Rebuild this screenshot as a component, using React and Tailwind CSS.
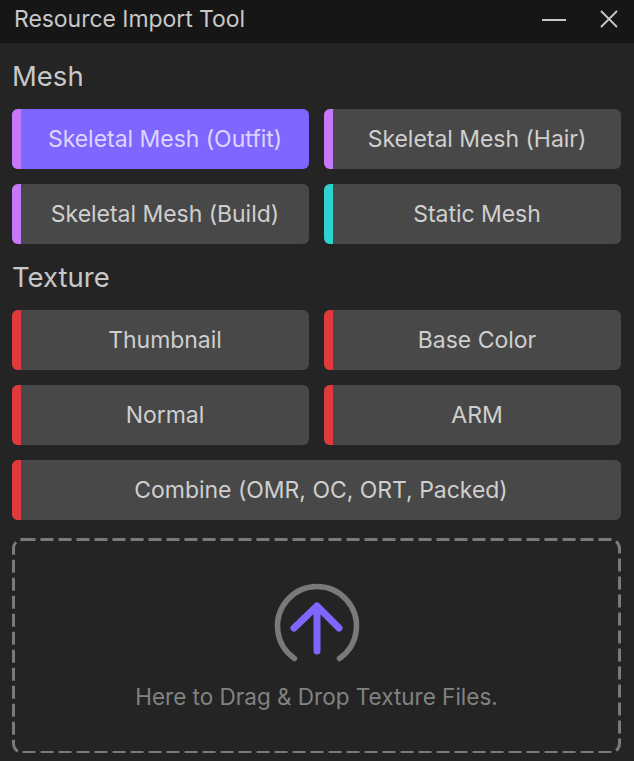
const meshButtons = [
  { label: 'Skeletal Mesh (Outfit)', accent: 'bg-[#c678fa]', active: true },
  { label: 'Skeletal Mesh (Hair)', accent: 'bg-[#c678fa]' },
  { label: 'Skeletal Mesh (Build)', accent: 'bg-[#c678fa]' },
  { label: 'Static Mesh', accent: 'bg-[#2dd4cf]' },
];

const textureButtons = [
  { label: 'Thumbnail', accent: 'bg-[#e03a3c]' },
  { label: 'Base Color', accent: 'bg-[#e03a3c]' },
  { label: 'Normal', accent: 'bg-[#e03a3c]' },
  { label: 'ARM', accent: 'bg-[#e03a3c]' },
  { label: 'Combine (OMR, OC, ORT, Packed)', accent: 'bg-[#e03a3c]', wide: true },
];

const TypeButton = ({ label, accent, active, wide }) => (
  <button
    className={`flex h-[60px] overflow-hidden rounded-[6px] text-[23px] tracking-[-0.03px] ${wide ? 'col-span-2' : ''} ${
      active ? 'bg-[#7f66ff] text-[#dcd6ff]' : 'bg-[#484848] text-[#cfcfcf]'
    }`}
  >
    <span className={`w-[9px] shrink-0 ${accent}`} />
    <span className="flex flex-1 items-center justify-center">{label}</span>
  </button>
);

const App = () => {
  return (
    <div className="flex h-[761px] w-[634px] flex-col overflow-hidden bg-[#242424] font-['Inter',sans-serif]">
      {/* title bar */}
      <div className="flex h-[43px] shrink-0 items-center justify-between bg-[#161616] pb-[5px] pl-[14px] pr-[16px]">
        <span className="text-[23px] tracking-[-0.05px] text-[#c8c8c8]">Resource Import Tool</span>
        <div className="flex items-center gap-[34px] text-[#c8c8c8]">
          <svg width="24" height="18" viewBox="0 0 24 18" fill="none" stroke="currentColor" strokeWidth="2">
            <path d="M0 10H24" />
          </svg>
          <svg width="18" height="18" viewBox="0 0 18 18" fill="none" stroke="currentColor" strokeWidth="1.8">
            <path d="M1 1L17 17M17 1L1 17" />
          </svg>
        </div>
      </div>

      <div className="flex flex-1 flex-col pb-[8px] pl-[12px] pr-[13px]">
        <h2 className="flex h-[66px] items-center pt-[2px] text-[27.5px] text-[#c8c8c8]">Mesh</h2>
        <div className="grid grid-cols-2 gap-[15px]">
          {meshButtons.map((item) => (
            <TypeButton key={item.label} {...item} />
          ))}
        </div>

        <h2 className="flex h-[66px] items-center pt-[2px] text-[27.5px] text-[#c8c8c8]">Texture</h2>
        <div className="grid grid-cols-2 gap-[15px]">
          {textureButtons.map((item) => (
            <TypeButton key={item.label} {...item} />
          ))}
        </div>

        {/* drop zone */}
        <div className="relative mt-[18px] flex flex-1 flex-col items-center pt-[43px]">
          <svg className="absolute inset-0 h-full w-full" fill="none">
            <rect
              x="1.5"
              y="1.5"
              width="606"
              height="213"
              rx="9"
              stroke="#7a7a7a"
              strokeWidth="3"
              strokeDasharray="13 5"
            />
          </svg>
          <svg width="90" height="90" viewBox="0 0 90 90" fill="none" strokeLinecap="round" strokeLinejoin="round">
            <path d="M22.5 77.5A39.5 39.5 0 1 1 67.5 77.5" stroke="#7a7a7a" strokeWidth="5.5" />
            <path d="M45 70V25M22 47L45 25L67 47" stroke="#7f66ff" strokeWidth="7" />
          </svg>
          <p className="mt-[9px] text-[22.5px] text-[#828282]">Here to Drag &amp; Drop Texture Files.</p>
        </div>
      </div>
    </div>
  );
};

export default App;
